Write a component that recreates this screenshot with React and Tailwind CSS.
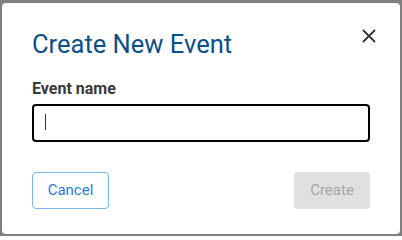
import React, { useState } from 'react';

export default function App() {
  const [name, setName] = useState('');

  return (
    <div className="w-[402px] h-[236px] bg-[#808080] pt-[3px] pl-[2px] font-['Roboto',sans-serif]">
      <div className="w-[398px] h-[231px] bg-white rounded-[4px] px-[30px] pt-[25px] flex flex-col">
        <div className="flex items-start justify-between">
          <h2 className="text-[25.5px] leading-[32px] text-[#0d4f87]">Create New Event</h2>
          <button className="mt-[0px] mr-[-7px] w-[16px] h-[16px] flex items-center justify-center text-[#333]">
            <svg width="14" height="14" viewBox="0 0 14 14" fill="none" stroke="currentColor" strokeWidth="1.8">
              <path d="M1 1L13 13M13 1L1 13" />
            </svg>
          </button>
        </div>
        <label className="mt-[20px] text-[16px] leading-[18px] font-bold text-[#3a3a3a]">Event name</label>
        <div className="relative mt-[6px] w-[338px]">
          <input
            autoFocus
            value={name}
            onChange={(e) => setName(e.target.value)}
            className="h-[38px] w-full border-2 border-black rounded-[4px] px-[11px] text-[15px] outline-none caret-[#333]"
          />
          {name === '' && (
            <div className="absolute left-[13px] top-[10px] w-[1px] h-[16px] bg-[#333] pointer-events-none" />
          )}
        </div>
        <div className="mt-[30px] flex items-center justify-between w-[338px]">
          <button className="h-[37px] w-[77px] border border-[#7db6ea] rounded-[4px] text-[15px] text-[#2b7bd4]">
            Cancel
          </button>
          <button disabled className="h-[37px] w-[76px] bg-[#e0e0e0] rounded-[4px] text-[15px] text-[#a6a6a6]">
            Create
          </button>
        </div>
      </div>
    </div>
  );
}
